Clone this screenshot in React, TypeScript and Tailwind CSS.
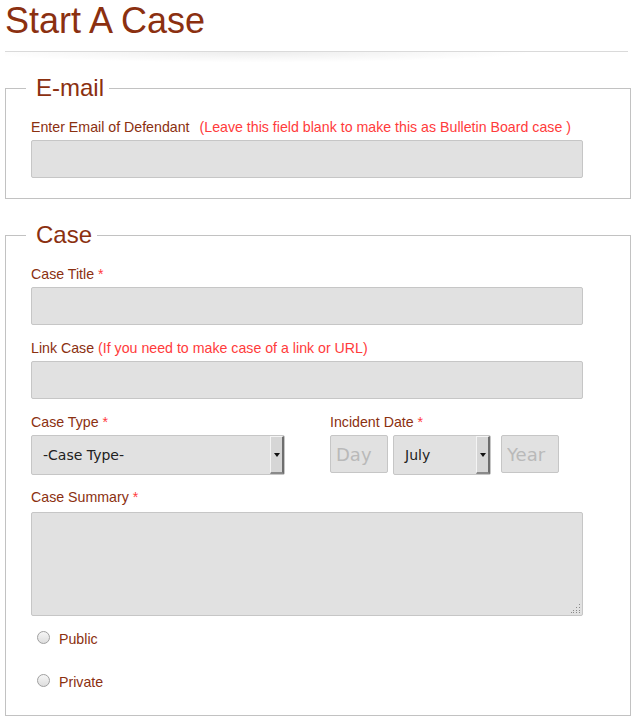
import React from "react";

const labelCls = "block text-[14.2px] leading-[20px] text-[#8b3010] [font-family:'Liberation_Sans',Arial,sans-serif]";
const inputCls =
  "block w-[552px] h-[38px] rounded-[2px] border border-[#c6c6c6] bg-[#e1e1e1] outline-none";

const Req = () => <span className="text-[#ff3b3b]"> *</span>;

const SelectBox = ({ value, width }: { value: string; width: string }) => (
  <div className={`flex h-[40px] ${width} rounded-[2px] border border-[#c6c6c6] bg-[#e1e1e1]`}>
    <div className="flex flex-1 items-center pl-[11px] text-[14px] text-[#222] [font-family:'DejaVu_Sans',sans-serif]">
      {value}
    </div>
    <div className="flex w-[14px] items-center justify-center border-l border-t border-l-[#f4f4f4] border-t-[#f4f4f4] border-r-2 border-b-2 border-r-[#6e6e6e] border-b-[#8a8a8a] bg-[#d6d6d6]">
      <svg width="6" height="4" viewBox="0 0 6 4">
        <path d="M0 0h6L3 4z" fill="#111" />
      </svg>
    </div>
  </div>
);

const Radio = ({ label }: { label: string }) => (
  <label className="flex items-center h-[20px] pl-[6px]">
    <span className="mt-[-3px] block w-[13px] h-[13px] rounded-full border border-[#a0a0a0] bg-[linear-gradient(#f6f6f6,#dedede)]" />
    <span className="ml-[9px] mt-[2px] text-[14.2px] text-[#8b3010] [font-family:'Liberation_Sans',Arial,sans-serif]">{label}</span>
  </label>
);

export default function App() {
  return (
    <div className="min-h-[723px] bg-white pl-[5px] pr-[8px] [font-family:'Liberation_Sans',Arial,sans-serif]">
      <h1 className="text-[36px] leading-[41px] text-[#8b3010]">Start A Case</h1>

      {/* Divider */}
      <div className="mt-[10px] mr-[3px] h-px bg-[#dadada]" />
      <div className="h-[14px] mr-[3px] bg-[radial-gradient(ellipse_60%_100%_at_40%_0%,rgba(0,0,0,0.07),transparent_75%)]" />

      {/* E-mail */}
      <fieldset className="mt-[8px] border border-[#c2c2c2] px-[25px] pt-[15px] pb-[20px]">
        <legend className="ml-[-5px] pl-[10px] pr-[5px] text-[24px] leading-[28px] text-[#8b3010]">E-mail</legend>
        <label className={labelCls}>
          Enter Email of Defendant
          <span className="ml-[10px] text-[#ff3b3b]">(Leave this field blank to make this as Bulletin Board case )</span>
        </label>
        <input className={`${inputCls} mt-[3px]`} />
      </fieldset>

      {/* Case */}
      <fieldset className="mt-[22px] border border-[#c2c2c2] px-[25px] pt-[15px] pb-[23px]">
        <legend className="ml-[-5px] pl-[10px] pr-[5px] text-[24px] leading-[28px] text-[#8b3010]">Case</legend>

        <label className={labelCls}>
          Case Title
          <Req />
        </label>
        <input className={`${inputCls} mt-[3px]`} />

        <label className={`${labelCls} mt-[13px]`}>
          Link Case <span className="text-[#ff3b3b]">(If you need to make case of a link or URL)</span>
        </label>
        <input className={`${inputCls} mt-[3px]`} />

        <div className="mt-[13px] flex">
          <div className="w-[299px]">
            <label className={labelCls}>
              Case Type
              <Req />
            </label>
            <div className="mt-[3px]">
              <SelectBox value="-Case Type-" width="w-[254px]" />
            </div>
          </div>
          <div>
            <label className={labelCls}>
              Incident Date
              <Req />
            </label>
            <div className="mt-[3px] flex items-start">
              <input
                placeholder="Day"
                className="w-[58px] h-[38px] rounded-[2px] border border-[#c6c6c6] bg-[#e1e1e1] pl-[5px] text-[18px] outline-none placeholder:text-[#b9b9b9] [font-family:'DejaVu_Sans',sans-serif]"
              />
              <div className="ml-[5px]">
                <SelectBox value="July" width="w-[98px]" />
              </div>
              <input
                placeholder="Year"
                className="ml-[10px] w-[58px] h-[38px] rounded-[2px] border border-[#c6c6c6] bg-[#e1e1e1] pl-[5px] text-[18px] outline-none placeholder:text-[#b9b9b9] [font-family:'DejaVu_Sans',sans-serif]"
              />
            </div>
          </div>
        </div>

        <label className={`${labelCls} mt-[12px]`}>
          Case Summary
          <Req />
        </label>
        <div className="relative mt-[5px] w-[552px] h-[104px] rounded-[2px] border border-[#c6c6c6] bg-[#e1e1e1]">
          <textarea className="block h-full w-full resize-none bg-transparent outline-none" />
          <svg className="absolute right-[1px] bottom-[1px]" width="10" height="10" viewBox="0 0 10 10">
            <g fill="#8a8a8a">
              <rect x="8" y="0" width="1" height="1" />
              <rect x="8" y="3" width="1" height="1" />
              <rect x="5" y="3" width="1" height="1" />
              <rect x="8" y="6" width="1" height="1" />
              <rect x="5" y="6" width="1" height="1" />
              <rect x="2" y="6" width="1" height="1" />
              <rect x="8" y="8" width="1" height="1" />
              <rect x="5" y="8" width="1" height="1" />
              <rect x="2" y="8" width="1" height="1" />
              <rect x="0" y="8" width="1" height="1" />
            </g>
          </svg>
        </div>

        <div className="mt-[13px]">
          <Radio label="Public" />
        </div>
        <div className="mt-[23px]">
          <Radio label="Private" />
        </div>
      </fieldset>
    </div>
  );
}
